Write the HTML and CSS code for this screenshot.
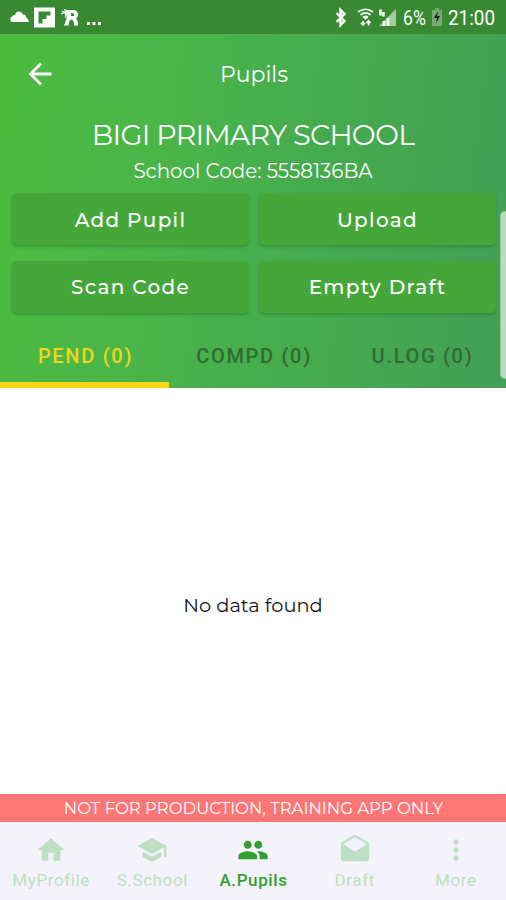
FILE: index.html
```html
<!DOCTYPE html>
<html lang="en">
<head>
<meta charset="utf-8">
<title>Pupils</title>
<link rel="stylesheet" href="styles.css">
</head>
<body>
<div class="screen">
  <div class="status">
    <svg class="st-left" width="110" height="34" viewBox="0 0 110 34" fill="#fff">
      <path d="M12 22a3 3 0 0 1 0-5.500q1-2 3-1.500c1-4.500 6.500-4.500 8-.5q3 0 3 3 3 1 2.500 4.500z"/>
      <path fill-rule="evenodd" d="M34 7.500h21v20H34zM38.500 11.500v12h4v-4.500h4v-3.500h4v-4z"/>
      <path d="M66 10h7q5 0 5 5 0 2.500-2 3.500 2 1.500 2 7h-4q0-6-2.500-6-2.500 0-3 6H64l3-8zM71 13v3h3q1-2-1-3z" fill-rule="evenodd"/>
      <path d="M61 14l7-3M62 11l7 5M65 9l1 9" stroke="#fff" stroke-width="1.300"/>
      <path d="M87 22h3v3h-3zM92.500 22h3v3h-3zM98 22h3v3h-3z"/>
    </svg>
    <svg class="st-mid" width="68" height="34" viewBox="0 0 68 34" fill="none" stroke="#fff">
      <path d="M4.500 13l8 8-4 4v-15l4 4-8 8" stroke-width="2.400"/>
      <path d="M26 12q7.500-5.500 15 0M28.500 14.800q5-4 10 0M31 17.500q2.500-2 5 0" stroke-width="1.700"/>
      <path d="M31 17h5l-2.500 3z" fill="#fff" stroke="none"/>
      <path d="M31 25v-4M36.500 21v4.500M29 22.800l2 2.200 2-2.200M34.500 23l2-2.200 2 2.200" stroke-width="1.700"/>
      <path d="M47 26L64 9v17z" fill="#a5cda0" stroke="none"/>
      <path d="M48.500 9.500v6M51.500 12v4.500M52 21v5M56 18v8" stroke-width="2.600"/>
    </svg>
    <span class="pct">6%</span>
    <svg class="bat" width="12" height="18" viewBox="0 0 12 18"><path d="M1 2h3V0h4v2h3v16H1z" fill="#79aa73"/><path d="M7 3L3 10h3l-1 5 4-7H6z" fill="#102010"/></svg>
    <span class="time">21:00</span>
  </div>
  <header class="header">
    <div class="appbar">
      <svg class="back" width="24" height="24" viewBox="0 0 24 24" fill="none" stroke="#fff" stroke-width="2.800"><path d="M23.500 12H2.500M13 1.500L2.500 12 13 22.500"/></svg>
      <span class="title">Pupils</span>
    </div>
    <h1 class="school">BIGI PRIMARY SCHOOL</h1>
    <div class="code">School Code: 5558136BA</div>
    <div class="actions">
      <button class="btn top">Add Pupil</button>
      <button class="btn top">Upload</button>
      <button class="btn">Scan Code</button>
      <button class="btn">Empty Draft</button>
    </div>
    <div class="tabs">
      <div class="tab on">PEND (0)</div>
      <div class="tab">COMPD (0)</div>
      <div class="tab">U.LOG (0)</div>
    </div>
    <div class="edge"></div>
  </header>
  <main class="content"><span class="empty">No data found</span></main>
  <div class="notice"><span>NOT FOR PRODUCTION, TRAINING APP ONLY</span></div>
  <nav class="nav">
    <div class="item"><svg viewBox="0 0 24 24"><path d="M10 20v-6h4v6h5v-8h3L12 3 2 12h3v8z"/></svg><span>MyProfile</span></div>
    <div class="item"><svg viewBox="0 0 24 24"><path d="M5 13.180v4L12 21l7-3.820v-4L12 17l-7-3.820zM12 3L1 9l11 6 9-4.910V17h2V9L12 3z"/></svg><span>S.School</span></div>
    <div class="item on"><svg viewBox="0 0 24 24"><path d="M16 11c1.660 0 2.990-1.340 2.990-3S17.660 5 16 5s-3 1.340-3 3 1.340 3 3 3zm-8 0c1.660 0 2.990-1.340 2.990-3S9.660 5 8 5 5 6.340 5 8s1.340 3 3 3zm0 2c-2.330 0-7 1.170-7 3.500V19h14v-2.500c0-2.330-4.670-3.500-7-3.500zm8 0c-.29 0-.62.020-.97.050 1.160.84 1.970 1.970 1.970 3.450V19h6v-2.500c0-2.330-4.670-3.500-7-3.500z"/></svg><span>A.Pupils</span></div>
    <div class="item draft"><svg viewBox="0 0 24 24"><path d="M21.990 8c0-.72-.37-1.350-.94-1.700L12 1 2.950 6.300C2.380 6.650 2 7.280 2 8v10c0 1.100.9 2 2 2h16c1.100 0 2-.9 2-2l-.01-10zM12 13L3.740 7.840 12 3l8.260 4.840L12 13z"/></svg><span>Draft</span></div>
    <div class="item"><svg viewBox="0 0 24 24"><path d="M12 8c1.100 0 2-.9 2-2s-.9-2-2-2-2 .9-2 2 .9 2 2 2zm0 2c-1.100 0-2 .9-2 2s.9 2 2 2 2-.9 2-2-.9-2-2-2zm0 6c-1.100 0-2 .9-2 2s.9 2 2 2 2-.9 2-2-.9-2-2-2z"/></svg><span>More</span></div>
  </nav>
</div>
</body>
</html>
```
FILE: styles.css
```css
* { box-sizing: border-box; }
body { margin: 0; font-family: Montserrat, Inter, sans-serif; }
.screen { width: 506px; height: 900px; display: flex; flex-direction: column; background: #fff; overflow: hidden; }
.status { height: 34px; flex: none; display: flex; align-items: center; background: #398932; color: #fff; font-family: Roboto, sans-serif; font-size: 20px; white-space: nowrap; }
.st-mid { margin-left: 222px; }
.pct { width: 30px; margin-left: 3px; transform: scaleX(.88); transform-origin: left; padding-top: 2px; }
.bat { margin-left: -2px; }
.time { margin-left: 5px; transform: scaleX(.9); transform-origin: left; padding-top: 2px; font-size: 21px; }
.header { position: relative; height: 354px; flex: none; display: flex; flex-direction: column; color: #fff; background: linear-gradient(98deg, #4dbb3e 0%, #4ab44a 35%, #46ab4e 60%, #42a056 100%); }
.appbar { height: 80px; display: grid; grid-template-columns: 100px 1fr 100px; align-items: center; }
.back { margin-left: 28px; }
.title { text-align: center; font-size: 22px; letter-spacing: 0; padding-left: 2px; }
.school { margin: 0; height: 42px; line-height: 41px; text-align: center; font-size: 28.500px; font-weight: 400; letter-spacing: -.75px; white-space: nowrap; }
.code { height: 37px; line-height: 31px; text-align: center; font-size: 19.900px; white-space: nowrap; }
.actions { display: grid; grid-template-columns: 237px 237px; grid-auto-rows: 52px; gap: 16px 10px; padding-left: 12px; }
.btn { border: 0; padding: 0; border-radius: 5px; background: #45a73a; color: #fff; font: 500 20px Montserrat, Inter, sans-serif; letter-spacing: 1.300px; box-shadow: 0 2px 3px rgba(20, 100, 30, .35); }
.btn.top { padding-top: 2px; }
.tabs { margin-top: auto; height: 64px; display: grid; grid-template-columns: 169px 168px 169px; }
.tab { display: flex; justify-content: center; padding: 20px 0 0 2px; font: 500 20px/24px Roboto, sans-serif; letter-spacing: 1.700px; color: #2f6b32; border-bottom: 6px solid transparent; }
.tab.on { color: #f2d51c; border-color: #fcd515; }
.edge { position: absolute; right: 0; top: 177px; width: 6px; height: 168px; border-radius: 5px 0 0 5px; background: #b9dbbd; border: 1px solid #8fc696; border-right: 0; }
.content { flex: 1; display: flex; justify-content: center; align-items: center; padding-top: 27px; font-size: 19.400px; color: #161616; }
.notice { height: 28px; flex: none; display: flex; align-items: center; justify-content: center; padding-left: 1px; background: #ff7676; color: #fff; font-size: 16.500px; white-space: nowrap; }
.nav { height: 78px; flex: none; display: grid; grid-template-columns: repeat(5, 1fr); background: #f4f3fb; }
.item { display: flex; flex-direction: column; align-items: center; padding: 12px 0 0 1px; color: #bfdfc4; font: 400 17px/20px Roboto, sans-serif; letter-spacing: .6px; }
.item svg { width: 32px; height: 32px; fill: currentColor; margin-bottom: 4px; }
.item.draft svg { width: 34px; height: 34px; margin-top: -1px; margin-bottom: 3px; }
.item.on { color: #32a02f; font-weight: 500; }
```
